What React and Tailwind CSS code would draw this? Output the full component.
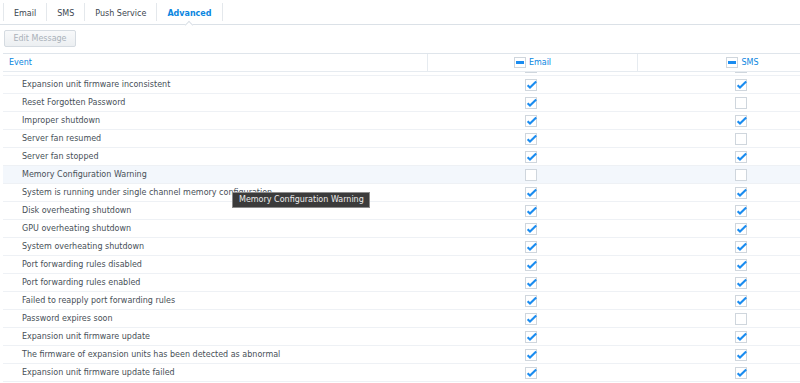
import React from 'react';

const tabs = ['Email', 'SMS', 'Push Service', 'Advanced'];

const events = [
  ['Hidden row above', true, true],
  ['Expansion unit firmware inconsistent', true, true],
  ['Reset Forgotten Password', true, false],
  ['Improper shutdown', true, true],
  ['Server fan resumed', true, false],
  ['Server fan stopped', true, true],
  ['Memory Configuration Warning', false, false],
  ['System is running under single channel memory configuration', true, true],
  ['Disk overheating shutdown', true, true],
  ['GPU overheating shutdown', true, true],
  ['System overheating shutdown', true, true],
  ['Port forwarding rules disabled', true, true],
  ['Port forwarding rules enabled', true, true],
  ['Failed to reapply port forwarding rules', true, true],
  ['Password expires soon', true, false],
  ['Expansion unit firmware update', true, true],
  ['The firmware of expansion units has been detected as abnormal', true, true],
  ['Expansion unit firmware update failed', true, true],
];

const Check = ({ checked }) => (
  <svg width="12" height="12" viewBox="0 0 12 12" className="overflow-visible">
    <rect x="0.5" y="0.5" width="11" height="11" fill="#fff" stroke="#cfd6dd" />
    {checked && (
      <path d="M2.6 6.2 L5 8.6 L11.2 2.4" fill="none" stroke="#1a8cf0" strokeWidth="2.1" />
    )}
  </svg>
);

const Partial = () => (
  <svg width="12" height="11" viewBox="0 0 12 11">
    <rect x="0.5" y="0.5" width="11" height="10" fill="#fff" stroke="#cfd6dd" />
    <rect x="2" y="4" width="8" height="3" fill="#1a8cf0" />
  </svg>
);

const App = () => {
  return (
    <div className="relative w-[800px] h-[383px] overflow-hidden bg-white font-['DejaVu_Sans',sans-serif] text-[8px] leading-none">
      {/* tab bar */}
      <div className="flex items-stretch h-[25px] pl-[3px] border-b border-[#dbe1e7]">
        {tabs.map((t, i) => (
          <div
            key={t}
            className={`relative flex items-center my-[3px] pt-[3px] px-[10px] border-l border-[#e4e8ec] ${
              i === tabs.length - 1 ? 'border-r font-bold text-[#0a86e0]' : 'text-[#3c4650]'
            }`}
          >
            {t}
            {i === tabs.length - 1 && (
              <div className="absolute left-1/2 -translate-x-1/2 top-[19px] w-[6px] h-[6px] rotate-45 bg-white border-l border-t border-[#dbe1e7]" />
            )}
          </div>
        ))}
      </div>

      {/* toolbar */}
      <div className="pt-[5px] pl-[4px]">
        <div className="w-[72px] h-[17px] flex items-center justify-center pt-[1px] rounded-[2px] border border-[#d5dbe1] bg-gradient-to-b from-[#f8f9fa] to-[#eceff2] text-[#a9b1b9]">
          Edit Message
        </div>
      </div>

      {/* table */}
      <div className="mt-[6px] ml-[3px] border-t border-[#dfe5eb]">
        <div className="grid grid-cols-[424px_210px_210px] h-[18px] border-b border-[#e6ebf0] text-[#0a86e0]">
          <div className="flex items-center pl-[6px]">Event</div>
          <div className="flex items-center justify-center gap-[3px] border-l border-[#e6ebf0]">
            <Partial />
            <span>Email</span>
          </div>
          <div className="flex items-center justify-center gap-[3px] border-l border-[#e6ebf0]">
            <Partial />
            <span>SMS</span>
          </div>
        </div>

        <div className="h-[312px] overflow-hidden">
          <div className="-mt-[14px]">
            {events.map(([name, email, sms], i) => (
              <div
                key={i}
                className={`grid grid-cols-[424px_210px_210px] h-[18px] border-b border-[#eef1f5] text-[#474f57] ${
                  name === 'Memory Configuration Warning' ? 'bg-[#f3f7fc]' : ''
                }`}
              >
                <div className="flex items-center pl-[19px] pt-[1px] whitespace-nowrap">{i === 0 ? '' : name}</div>
                <div className="flex items-center justify-center pr-[2px]">
                  <Check checked={email} />
                </div>
                <div className="flex items-center justify-center pr-[2px]">
                  <Check checked={sms} />
                </div>
              </div>
            ))}
          </div>
        </div>
      </div>

      {/* tooltip */}
      <div className="absolute left-[232px] top-[192px] w-[138px] h-[16px] flex items-center pl-[6px] bg-[#3b3b3b] border border-[#8c8c8c] text-[#ececec]">
        Memory Configuration Warning
      </div>
    </div>
  );
};

export default App;
